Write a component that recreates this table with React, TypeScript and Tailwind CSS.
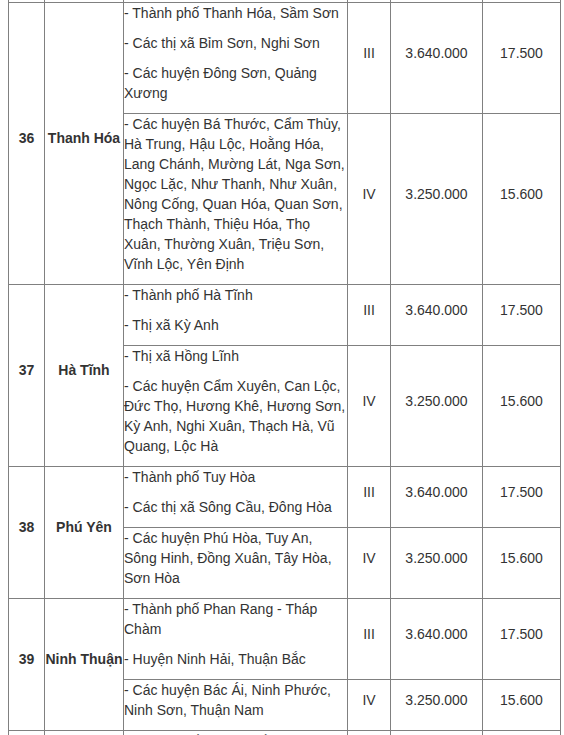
import React from "react";

type Sub = { lines: string[]; region: string; salary: string; extra: string };
type Prov = { no: string; name: string; subs: Sub[] };

const data: Prov[] = [
  {
    no: "36",
    name: "Thanh Hóa",
    subs: [
      {
        lines: [
          "- Thành phố Thanh Hóa, Sầm Sơn",
          "- Các thị xã Bỉm Sơn, Nghi Sơn",
          "- Các huyện Đông Sơn, Quảng Xương",
        ],
        region: "III",
        salary: "3.640.000",
        extra: "17.500",
      },
      {
        lines: [
          "- Các huyện Bá Thước, Cẩm Thủy, Hà Trung, Hậu Lộc, Hoằng Hóa, Lang Chánh, Mường Lát, Nga Sơn, Ngọc Lặc, Như Thanh, Như Xuân, Nông Cống, Quan Hóa, Quan Sơn, Thạch Thành, Thiệu Hóa, Thọ Xuân, Thường Xuân, Triệu Sơn, Vĩnh Lộc, Yên Định",
        ],
        region: "IV",
        salary: "3.250.000",
        extra: "15.600",
      },
    ],
  },
  {
    no: "37",
    name: "Hà Tĩnh",
    subs: [
      {
        lines: ["- Thành phố Hà Tĩnh", "- Thị xã Kỳ Anh"],
        region: "III",
        salary: "3.640.000",
        extra: "17.500",
      },
      {
        lines: [
          "- Thị xã Hồng Lĩnh",
          "- Các huyện Cẩm Xuyên, Can Lộc, Đức Thọ, Hương Khê, Hương Sơn, Kỳ Anh, Nghi Xuân, Thạch Hà, Vũ Quang, Lộc Hà",
        ],
        region: "IV",
        salary: "3.250.000",
        extra: "15.600",
      },
    ],
  },
  {
    no: "38",
    name: "Phú Yên",
    subs: [
      {
        lines: ["- Thành phố Tuy Hòa", "- Các thị xã Sông Cầu, Đông Hòa"],
        region: "III",
        salary: "3.640.000",
        extra: "17.500",
      },
      {
        lines: [
          "- Các huyện Phú Hòa, Tuy An, Sông Hinh, Đồng Xuân, Tây Hòa, Sơn Hòa",
        ],
        region: "IV",
        salary: "3.250.000",
        extra: "15.600",
      },
    ],
  },
  {
    no: "39",
    name: "Ninh Thuận",
    subs: [
      {
        lines: [
          "- Thành phố Phan Rang - Tháp Chàm",
          "- Huyện Ninh Hải, Thuận Bắc",
        ],
        region: "III",
        salary: "3.640.000",
        extra: "17.500",
      },
      {
        lines: ["- Các huyện Bác Ái, Ninh Phước, Ninh Sơn, Thuận Nam"],
        region: "IV",
        salary: "3.250.000",
        extra: "15.600",
      },
    ],
  },
  {
    no: "40",
    name: "Bình Thuận",
    subs: [
      {
        lines: ["- Thành phố Phan Thiết", "- Thị xã La Gi"],
        region: "III",
        salary: "3.640.000",
        extra: "17.500",
      },
      {
        lines: ["- Các huyện Hàm Thuận Bắc, Hàm Thuận Nam, Bắc Bình, Tuy Phong, Hàm Tân, Đức Linh, Tánh Linh"],
        region: "IV",
        salary: "3.250.000",
        extra: "15.600",
      },
    ],
  },
];

const td = "border border-[#808080] p-0 align-middle";

export default function App() {
  return (
    <div
      className="w-[564px] h-[735px] overflow-hidden bg-white text-[14px] leading-[20px] text-[#333333]"
      style={{ fontFamily: '"Liberation Sans", Arial, sans-serif' }}
    >
      <table className="ml-[8px] border-collapse table-fixed w-[552px]">
        <colgroup>
          <col className="w-[36px]" />
          <col className="w-[79px]" />
          <col className="w-[224px]" />
          <col className="w-[43px]" />
          <col className="w-[92px]" />
          <col className="w-[78px]" />
        </colgroup>
        <tbody>
          <tr className="h-[2px]">
            <td className="border-x border-[#808080] p-0" />
            <td className="border-x border-[#808080] p-0" />
            <td className="border-x border-[#808080] p-0" />
            <td className="border-x border-[#808080] p-0" />
            <td className="border-x border-[#808080] p-0" />
            <td className="border-x border-[#808080] p-0" />
          </tr>
          {data.map((p) =>
            p.subs.map((s, i) => (
              <tr key={p.no + i}>
                {i === 0 && (
                  <>
                    <td rowSpan={p.subs.length} className={`${td} text-center font-bold`}>
                      <p className="mb-[10px]">{p.no}</p>
                    </td>
                    <td rowSpan={p.subs.length} className={`${td} text-center font-bold`}>
                      <p className="mb-[10px]">{p.name}</p>
                    </td>
                  </>
                )}
                <td className={td}>
                  {s.lines.map((l, k) => (
                    <p key={k} className="mb-[10px]">
                      {l}
                    </p>
                  ))}
                </td>
                <td className={`${td} text-center`}>
                  <p className="mb-[10px]">{s.region}</p>
                </td>
                <td className={`${td} text-center`}>
                  <p className="mb-[10px]">{s.salary}</p>
                </td>
                <td className={`${td} text-center`}>
                  <p className="mb-[10px]">{s.extra}</p>
                </td>
              </tr>
            ))
          )}
        </tbody>
      </table>
    </div>
  );
}
